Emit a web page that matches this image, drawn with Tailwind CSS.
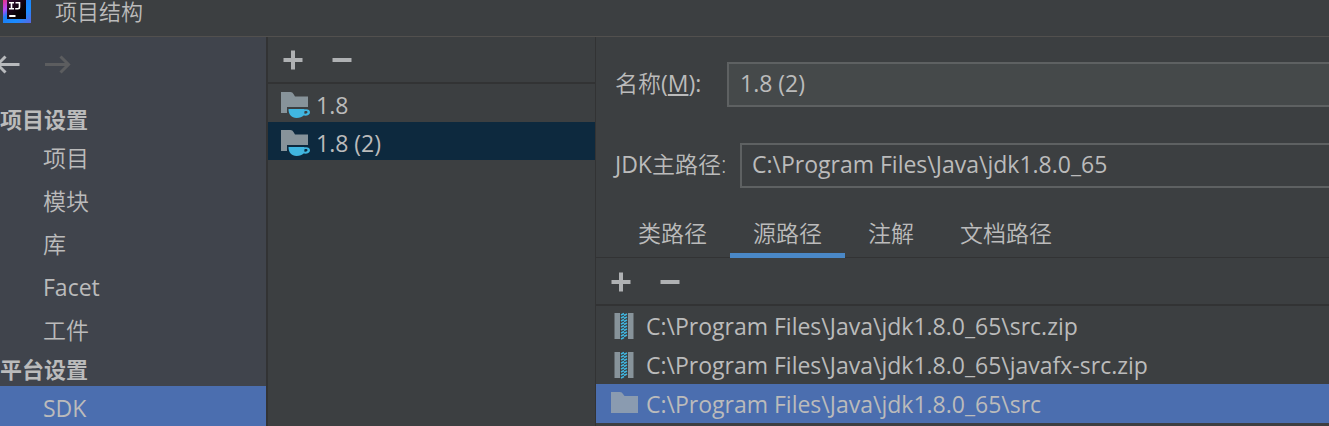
<!DOCTYPE html>
<html lang="zh-CN">
<head>
<meta charset="utf-8">
<meta name="viewport" content="width=device-width, initial-scale=1">
<title>项目结构</title>
<script src="https://cdn.jsdelivr.net/npm/@tailwindcss/browser@4"></script>
</head>
<body class="flex h-screen flex-col overflow-hidden bg-[#3c3f41] font-['Open_Sans','Noto_Sans_CJK_SC',sans-serif] text-[23px] leading-8 font-[350] text-[#bbbbbb]">
<svg class="hidden" aria-hidden="true">
  <symbol id="plus" viewBox="0 0 20 20"><path d="M10 .5v19M.5 10h19" fill="none" stroke="#afb1b3" stroke-width="4"/></symbol>
  <symbol id="minus" viewBox="0 0 20 20"><path d="M.5 10h19" fill="none" stroke="#afb1b3" stroke-width="4"/></symbol>
  <symbol id="sdk" viewBox="0 0 30 28">
    <path d="M1 1h9.500q2 0 3 2l1.500 2.500h13V16H7v6H1z" fill="#87939a"/>
    <path d="M8.500 18h16v.6c3-.8 5.500.4 5.500 2.600 0 2.600-2.800 4-6.400 3.400C22 26.200 20 27 16.500 27 11.500 27 8.500 23.500 8.500 18zm15.700 4.600c2 .3 3.300-.3 3.300-1.400 0-1-1.300-1.400-3-.9z" fill="#40b6e0"/>
  </symbol>
  <symbol id="zip" viewBox="0 0 20 28">
    <path d="M.5 1H6v26H.5zM14 1h5.500v26H14z" fill="#87939a"/>
    <path d="M7 3l3-1.500M10 3.500l3-1.500M7 6l3-1.500M10 6.500l3-1.500M7 9l3-1.500M10 9.500l3-1.500M7 12l3-1.500M10 12.500l3-1.500M7 15l3-1.500M10 15.500l3-1.500M7 18l3-1.500M10 18.500l3-1.500M7 21l3-1.500M10 21.500l3-1.500M7 24l3-1.500M10 24.500l3-1.500M7 27l3-1.500" fill="none" stroke="#40b6e0" stroke-width="1.400"/>
  </symbol>
</svg>

<header class="flex h-[37px] shrink-0 items-start gap-6 border-b border-[#52504e] pl-[3px]">
  <svg class="h-6 w-7" viewBox="0 0 28 24" aria-hidden="true">
    <defs>
      <linearGradient id="frame" x1="0" y1="0" x2="1" y2="1">
        <stop offset="0" stop-color="#fe2857"/><stop offset=".28" stop-color="#b74af7"/><stop offset=".42" stop-color="#1c7ff5"/><stop offset=".7" stop-color="#1a8cff"/><stop offset="1" stop-color="#5a66e0"/>
      </linearGradient>
      <linearGradient id="core" x1="0" y1="0" x2="1" y2="1">
        <stop offset="0" stop-color="#3a0b38"/><stop offset=".6" stop-color="#0a0208"/><stop offset="1" stop-color="#000"/>
      </linearGradient>
    </defs>
    <path d="M0-4h28v27H0z" fill="url(#frame)"/>
    <path d="M4-1h19v20H4z" fill="url(#core)"/>
    <path d="M6 2.700h5M8.500 2.700v6M6 8.700h5M12.500 2.700h4v4.300q0 1.700-1.700 1.700h-2.600" fill="none" stroke="#fff" stroke-width="1.600"/>
    <path d="M6.200 15h6.300v2H6.200z" fill="#fff"/>
  </svg>
  <h1 class="text-[22px] leading-[22px]">项目结构</h1>
</header>

<main class="flex min-h-0 flex-1">
  <nav class="w-[268px] shrink-0 overflow-hidden border-r-2 border-[#323334] bg-[#40444c]" aria-label="设置">
    <div class="flex h-16 items-start gap-6 pt-[17px]">
      <button aria-label="后退"><svg class="-ml-1 h-5 w-6" viewBox="0 0 24 20"><path d="M23.500 10.500H2M9.500 2.500l-8 8 8 8" fill="none" stroke="#b8babd" stroke-width="3"/></svg></button>
      <button aria-label="前进" disabled><svg class="h-5 w-7" viewBox="0 0 28 20"><path d="M1 10.500h24M16.500 2.500l8 8-8 8" fill="none" stroke="#5c5d5f" stroke-width="3"/></svg></button>
    </div>
    <h2 class="flex h-[35px] items-center text-[22px] font-bold">项目设置</h2>
    <ul>
      <li><a href="#project" class="flex h-[43px] items-center pl-[43px]">项目</a></li>
      <li><a href="#modules" class="flex h-[43px] items-center pl-[43px]">模块</a></li>
      <li><a href="#libraries" class="flex h-[43px] items-center pl-[43px]">库</a></li>
      <li><a href="#facets" class="flex h-[43px] items-center pl-[43px] font-normal">Facet</a></li>
      <li><a href="#artifacts" class="flex h-[43px] items-center pl-[43px]">工件</a></li>
    </ul>
    <h2 class="flex h-[35px] items-center text-[22px] font-bold">平台设置</h2>
    <ul>
      <li><a href="#sdk" aria-current="page" class="flex h-[43px] items-center bg-[#4b6eaf] pl-[43px] font-normal">SDK</a></li>
    </ul>
  </nav>

  <section class="w-[327px] shrink-0 font-normal" aria-label="SDK 列表">
    <div class="flex h-[47px] items-center gap-[29px] border-b-2 border-[#323334] pt-px pl-[15px]">
      <button aria-label="添加 SDK"><svg class="size-5"><use href="#plus"/></svg></button>
      <button aria-label="移除 SDK"><svg class="size-5"><use href="#minus"/></svg></button>
    </div>
    <ul>
      <li><button class="flex h-[38px] w-full items-center gap-[6px] pt-[3px] pl-3"><svg class="h-7 w-[30px]"><use href="#sdk"/></svg>1.8</button></li>
      <li><button class="flex h-[38px] w-full items-center gap-[6px] bg-[#0d293e] pt-[3px] pl-3" aria-pressed="true"><svg class="h-7 w-[30px]"><use href="#sdk"/></svg>1.8 (2)</button></li>
    </ul>
  </section>

  <section class="flex min-w-0 flex-1 flex-col border-l border-[#323334]" aria-label="SDK 详情">
    <form class="flex flex-col gap-9 pt-[25px] pl-[19px]">
      <div class="flex items-center">
        <label for="name" class="w-28 shrink-0 pb-[3px] whitespace-nowrap">名称<span class="font-normal">(<u class="underline-offset-2">M</u>):</span></label>
        <input id="name" type="text" value="1.8 (2)" class="h-[45px] min-w-0 flex-1 border-2 border-r-0 border-[#5e6162] bg-[#45494a] px-[11px] pb-[3px] font-normal outline-none">
      </div>
      <div class="flex items-center">
        <label for="home" class="w-[125px] shrink-0 pb-[3px] whitespace-nowrap"><span class="font-normal">JDK</span>主路径:</label>
        <input id="home" type="text" value="C:\Program Files\Java\jdk1.8.0_65" class="h-[45px] min-w-0 flex-1 border-2 border-r-0 border-[#5e6162] bg-[#3c3f41] px-[10px] pb-[3px] font-normal outline-none">
      </div>
    </form>
    <div role="tablist" class="mt-5 flex h-[50px] border-b border-[#323334] pl-[19px]">
      <button role="tab" aria-selected="false" class="h-[50px] px-[23px]">类路径</button>
      <button role="tab" aria-selected="true" class="h-[50px] px-[23px] shadow-[inset_0_-5px_#4a88c7]">源路径</button>
      <button role="tab" aria-selected="false" class="h-[50px] px-[23px]">注解</button>
      <button role="tab" aria-selected="false" class="h-[50px] px-[23px]">文档路径</button>
    </div>
    <div class="flex h-12 items-center gap-[29px] border-b-2 border-[#323334] pt-px pl-[15px]">
      <button aria-label="添加路径"><svg class="size-5"><use href="#plus"/></svg></button>
      <button aria-label="移除路径"><svg class="size-5"><use href="#minus"/></svg></button>
    </div>
    <ul class="font-normal whitespace-nowrap">
      <li><button class="flex h-[39px] w-full items-center gap-3 pl-[18px]"><svg class="h-7 w-5"><use href="#zip"/></svg>C:\Program Files\Java\jdk1.8.0_65\src.zip</button></li>
      <li><button class="flex h-[39px] w-full items-center gap-3 pl-[18px]"><svg class="h-7 w-5"><use href="#zip"/></svg>C:\Program Files\Java\jdk1.8.0_65\javafx-src.zip</button></li>
      <li><button aria-pressed="true" class="flex h-[39px] w-full items-center gap-2 bg-[#4b6eaf] pl-[15px]"><svg class="h-6 w-[27px]" viewBox="0 0 27 24"><path d="M0 0h9q2 0 3 2l1.500 2H27v17H0z" fill="#8a9bb0"/></svg>C:\Program Files\Java\jdk1.8.0_65\src</button></li>
    </ul>
  </section>
</main>
</body>
</html>
